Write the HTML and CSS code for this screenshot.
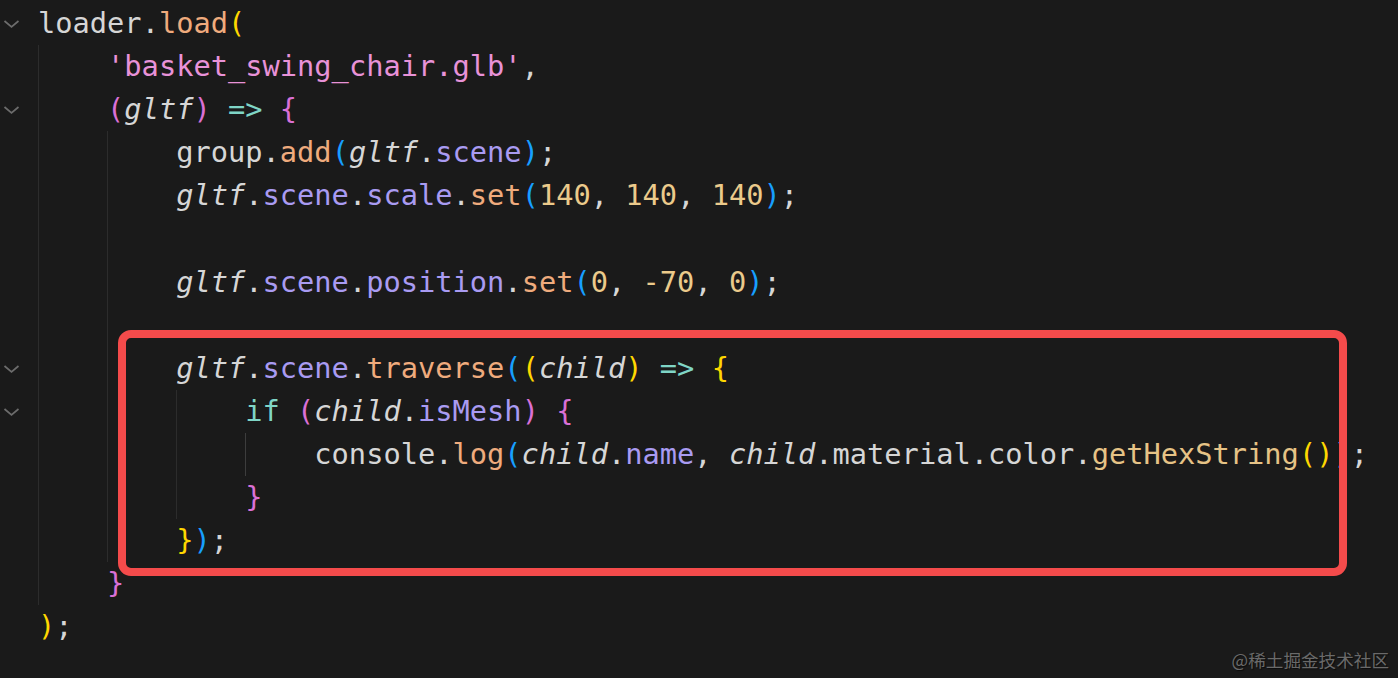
FILE: index.html
```html
<!DOCTYPE html>
<html lang="en">
<head>
<meta charset="utf-8">
<title>loader.load</title>
<link rel="stylesheet" href="styles.css">
</head>
<body>
<div class="editor">
  <div class="gutter">
    <div class="gl"><svg class="chev" viewBox="0 0 16 8"><polyline points="1,1 8,7 15,1"/></svg></div>
    <div class="gl"></div>
    <div class="gl"><svg class="chev" viewBox="0 0 16 8"><polyline points="1,1 8,7 15,1"/></svg></div>
    <div class="gl"></div>
    <div class="gl"></div>
    <div class="gl"></div>
    <div class="gl"></div>
    <div class="gl"></div>
    <div class="gl"><svg class="chev" viewBox="0 0 16 8"><polyline points="1,1 8,7 15,1"/></svg></div>
    <div class="gl"><svg class="chev" viewBox="0 0 16 8"><polyline points="1,1 8,7 15,1"/></svg></div>
    <div class="gl"></div>
    <div class="gl"></div>
    <div class="gl"></div>
    <div class="gl"></div>
    <div class="gl"></div>
  </div>
  <div class="code">
    <div class="ln"><span class="v">loader</span><span class="p">.</span><span class="fn">load</span><span class="b1">(</span></div>
    <div class="ln"><span class="ind"></span><span class="str">'basket_swing_chair.glb'</span><span class="p">,</span></div>
    <div class="ln"><span class="ind"></span><span class="b2">(</span><span class="it">gltf</span><span class="b2">)</span><span class="p"> </span><span class="kw">=&gt;</span><span class="p"> </span><span class="b2">{</span></div>
    <div class="ln"><span class="ind"></span><span class="ind"></span><span class="v">group</span><span class="p">.</span><span class="fn">add</span><span class="b3">(</span><span class="it">gltf</span><span class="p">.</span><span class="pr">scene</span><span class="b3">)</span><span class="p">;</span></div>
    <div class="ln"><span class="ind"></span><span class="ind"></span><span class="it">gltf</span><span class="p">.</span><span class="pr">scene</span><span class="p">.</span><span class="pr">scale</span><span class="p">.</span><span class="fn">set</span><span class="b3">(</span><span class="num">140</span><span class="p">, </span><span class="num">140</span><span class="p">, </span><span class="num">140</span><span class="b3">)</span><span class="p">;</span></div>
    <div class="ln"><span class="ind"></span><span class="ind"></span></div>
    <div class="ln"><span class="ind"></span><span class="ind"></span><span class="it">gltf</span><span class="p">.</span><span class="pr">scene</span><span class="p">.</span><span class="pr">position</span><span class="p">.</span><span class="fn">set</span><span class="b3">(</span><span class="num">0</span><span class="p">, </span><span class="num">-70</span><span class="p">, </span><span class="num">0</span><span class="b3">)</span><span class="p">;</span></div>
    <div class="ln"><span class="ind"></span><span class="ind"></span></div>
    <div class="ln"><span class="ind"></span><span class="ind"></span><span class="it">gltf</span><span class="p">.</span><span class="pr">scene</span><span class="p">.</span><span class="fn">traverse</span><span class="b3">(</span><span class="b1">(</span><span class="it">child</span><span class="b1">)</span><span class="p"> </span><span class="kw">=&gt;</span><span class="p"> </span><span class="b1">{</span></div>
    <div class="ln"><span class="ind"></span><span class="ind"></span><span class="ind"></span><span class="kw">if</span><span class="p"> </span><span class="b2">(</span><span class="it">child</span><span class="p">.</span><span class="pr">isMesh</span><span class="b2">)</span><span class="p"> </span><span class="b2">{</span></div>
    <div class="ln"><span class="ind"></span><span class="ind"></span><span class="ind"></span><span class="ind active"></span><span class="v">console</span><span class="p">.</span><span class="fn">log</span><span class="b3">(</span><span class="it">child</span><span class="p">.</span><span class="pr">name</span><span class="p">, </span><span class="it">child</span><span class="p">.</span><span class="v">material</span><span class="p">.</span><span class="v">color</span><span class="p">.</span><span class="fn2">getHexString</span><span class="b1">()</span><span class="b3">)</span><span class="p">;</span></div>
    <div class="ln"><span class="ind"></span><span class="ind"></span><span class="ind"></span><span class="b2">}</span></div>
    <div class="ln"><span class="ind"></span><span class="ind"></span><span class="b1">}</span><span class="b3">)</span><span class="p">;</span></div>
    <div class="ln"><span class="ind"></span><span class="b2">}</span></div>
    <div class="ln"><span class="b1">)</span><span class="p">;</span></div>
  </div>
</div>
<div class="highlight"></div>
<div class="watermark">@稀土掘金技术社区</div>
</body>
</html>
```
FILE: styles.css
```css
html, body {
  margin: 0;
  padding: 0;
  background: #1a1a1a;
  width: 1398px;
  height: 678px;
  overflow: hidden;
}

.editor {
  display: flex;
  padding-top: 2px;
  font-family: "DejaVu Sans Mono", "Liberation Mono", monospace;
  font-size: 28.7px;
}

.gutter {
  width: 38px;
  flex: none;
}

.gl {
  height: 43.1px;
  display: flex;
  align-items: center;
  justify-content: flex-start;
  padding-left: 3px;
  box-sizing: border-box;
}

.chev {
  width: 17px;
  height: 8px;
  fill: none;
  stroke: #6c6c6c;
  stroke-width: 1.7;
  margin-top: 1px;
  overflow: visible;
}

.code {
  flex: 1;
}

.ln {
  height: 43.1px;
  line-height: 43.1px;
  white-space: pre;
  color: #d4d4d4;
  overflow: visible;
}

.ind {
  display: inline-block;
  width: 4ch;
  height: 43.1px;
  vertical-align: top;
  box-sizing: border-box;
  border-left: 1px solid #2c2c2c;
}

.ind.active {
  border-left-color: #3d3d3d;
}

.v { color: #d6d6d6; }
.p { color: #d6d6d6; }
.it { color: #d6d6d6; font-style: italic; }
.fn { color: #efab7d; }
.fn2 { color: #e6c386; }
.pr { color: #a99bf2; }
.str { color: #e892d8; }
.num { color: #ebca8b; }
.kw { color: #7fd5c6; }
.b1 { color: #ffd700; }
.b2 { color: #da70d6; }
.b3 { color: #179fff; }

.highlight {
  position: absolute;
  left: 118px;
  top: 330px;
  width: 1229px;
  height: 246px;
  box-sizing: border-box;
  border: 8px solid #f44b4b;
  border-radius: 13px;
}

.watermark {
  position: absolute;
  right: 9px;
  bottom: 8px;
  font-family: "Noto Sans CJK SC", "Noto Sans", sans-serif;
  font-size: 17.6px;
  line-height: 20px;
  color: #6a6a6a;
  text-shadow: 1px 1px 1px rgba(0, 0, 0, 0.6);
}
```
